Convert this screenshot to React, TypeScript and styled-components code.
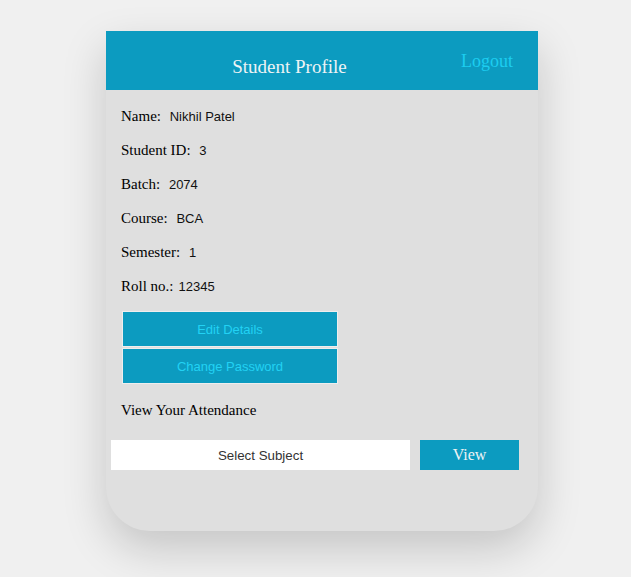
import React from "react";
import styled, { createGlobalStyle } from "styled-components";

const Global = createGlobalStyle`
  html, body { margin: 0; padding: 0; background: #f0f0f0; }
  body { font-family: "Liberation Serif", "Times New Roman", serif; }
`;

const Page = styled.div`
  min-height: 577px;
  box-sizing: border-box;
  padding: 31px 0 0 106px;
  background: #f0f0f0;
`;

const Card = styled.div`
  width: 432px;
  background: #dfdfdf;
  border-radius: 0 0 44px 44px;
  box-shadow: 0 18px 44px rgba(0, 0, 0, 0.18);
  overflow: hidden;
`;

const Header = styled.header`
  height: 59px;
  background: #0c9bc0;
  display: flex;
  align-items: center;
`;

const Title = styled.h2`
  flex: 1;
  margin: 12px 0 0 0;
  padding-left: 12px;
  text-align: center;
  font-size: 19px;
  font-weight: normal;
  color: #eef3f5;
`;

const Logout = styled.a`
  margin: 2px 25px 0 0;
  font-size: 18px;
  color: #1ccdf0;
  text-decoration: none;
  cursor: pointer;
`;

const Body = styled.div`
  padding: 9px 0 61px 0;
  display: flex;
  flex-direction: column;
`;

const InfoRow = styled.div`
  height: 34px;
  line-height: 34px;
  padding-left: 15px;
  font-size: 15px;
  color: #000;
`;

const Value = styled.span`
  margin-left: 5px;
  font-family: "Liberation Sans", Arial, sans-serif;
  font-size: 13px;
  color: #111;
`;

const Actions = styled.div`
  margin: 8px 0 0 16px;
  display: flex;
  flex-direction: column;
  gap: 1px;
`;

const ActionButton = styled.button`
  width: 216px;
  height: 36px;
  box-sizing: border-box;
  border: 1px solid #eeeeee;
  background: #0c9bc0;
  color: #22d2f4;
  font-family: "Liberation Sans", Arial, sans-serif;
  font-size: 13px;
  padding: 0;
  cursor: pointer;
`;

const SectionTitle = styled.div`
  margin-top: 9px;
  height: 34px;
  line-height: 34px;
  padding-left: 15px;
  font-size: 15px;
  color: #000;
`;

const AttendanceRow = styled.div`
  margin: 13px 19px 0 5px;
  display: flex;
  gap: 10px;
`;

const Select = styled.select`
  flex: 1;
  height: 30px;
  border: none;
  outline: none;
  background: #fff;
  appearance: none;
  -webkit-appearance: none;
  text-align: center;
  text-align-last: center;
  font-family: "Liberation Sans", Arial, sans-serif;
  font-size: 13.33px;
  color: #333;
  padding: 0;
`;

const ViewButton = styled.button`
  width: 99px;
  height: 30px;
  border: none;
  background: #0c9bc0;
  color: #eef3f5;
  font-family: "Liberation Serif", "Times New Roman", serif;
  font-size: 16px;
  padding: 0;
  cursor: pointer;
`;

const info: Array<[string, string, boolean]> = [
  ["Name:", "Nikhil Patel", true],
  ["Student ID:", "3", true],
  ["Batch:", "2074", true],
  ["Course:", "BCA", true],
  ["Semester:", "1", true],
  ["Roll no.:", "12345", false],
];

export default function App() {
  return (
    <>
      <Global />
      <Page>
        <Card>
          <Header>
            <Title>Student Profile</Title>
            <Logout>Logout</Logout>
          </Header>
          <Body>
            {info.map(([label, value, space]) => (
              <InfoRow key={label}>
                {label}
                {space ? " " : ""}
                <Value>{value}</Value>
              </InfoRow>
            ))}
            <Actions>
              <ActionButton>Edit Details</ActionButton>
              <ActionButton>Change Password</ActionButton>
            </Actions>
            <SectionTitle>View Your Attendance</SectionTitle>
            <AttendanceRow>
              <Select defaultValue="">
                <option value="">Select Subject</option>
              </Select>
              <ViewButton>View</ViewButton>
            </AttendanceRow>
          </Body>
        </Card>
      </Page>
    </>
  );
}
